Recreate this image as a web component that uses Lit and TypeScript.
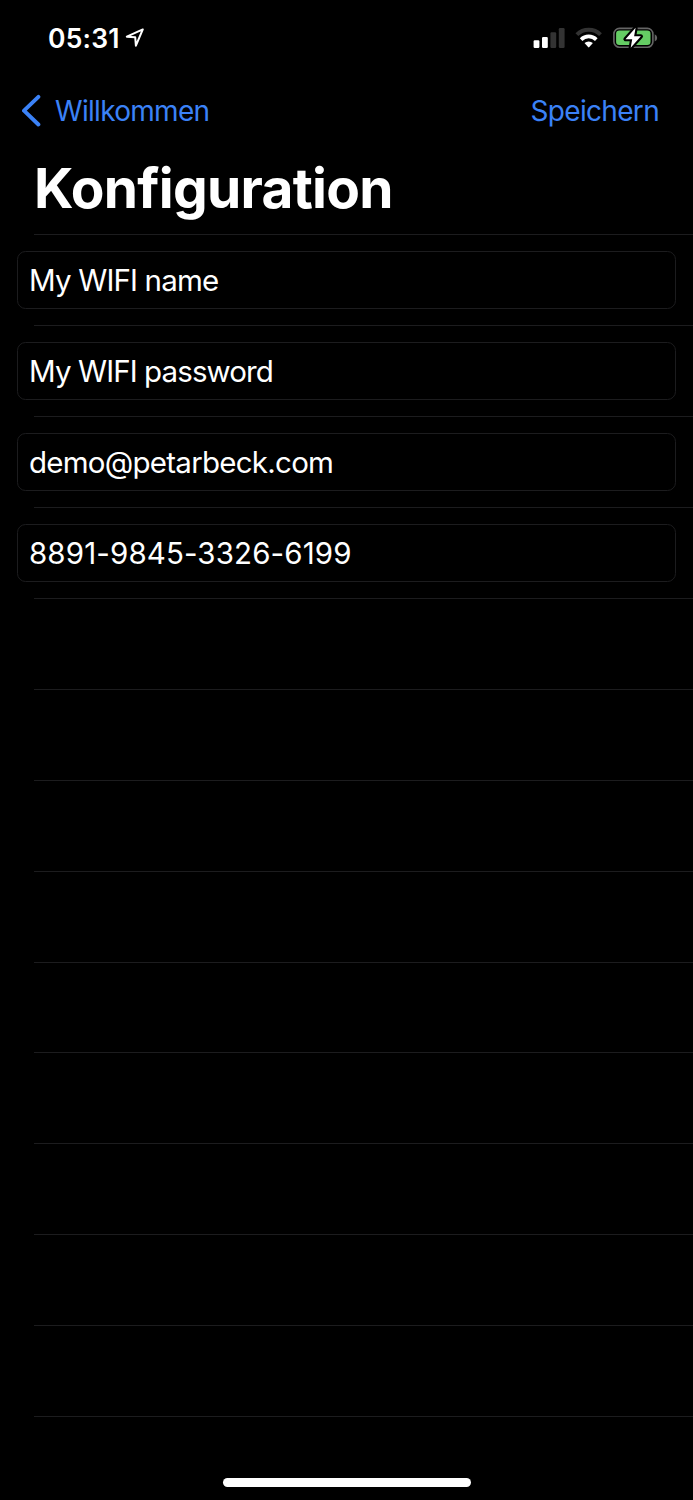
import { LitElement, html, css } from "lit";
import { customElement, state } from "lit/decorators.js";

@customElement("status-bar")
class StatusBar extends LitElement {
  static styles = css`
    :host { display: flex; justify-content: space-between; box-sizing: border-box; height: 76px; padding: 0 35px 0 48px; color: #fff; }
    .left { display: flex; }
    .time { font-size: 26.5px; line-height: 77px; font-weight: 600; letter-spacing: 0.2px; width: 76px; white-space: nowrap; }
    .arrow { margin-top: 27px; display: block; }
    .right { display: block; margin-top: 25px; }
  `;
  render() {
    return html`
      <div class="left">
        <span class="time">05:31</span>
        <svg class="arrow" width="22" height="22" viewBox="0 0 22 22" fill="none" stroke="#fff" stroke-width="2" stroke-linejoin="round">
          <path d="M18.8 2.4 L2.8 9.7 L11.2 10.2 L11.9 18.7 Z" />
        </svg>
      </div>
      <svg class="right" width="125" height="26" viewBox="0 0 125 26">
        <g fill="#fff">
          <rect x="0.6" y="15.2" width="5.8" height="7.7" rx="1.2" />
          <rect x="9" y="11.9" width="5.8" height="11" rx="1.2" />
        </g>
        <g fill="#333">
          <rect x="17.4" y="7.3" width="5.8" height="15.6" rx="1.2" />
          <rect x="25.8" y="3" width="5.8" height="19.9" rx="1.2" />
        </g>
        <g fill="none" stroke-width="4">
          <path stroke="#333" d="M43.9 9.6 A16.8 16.8 0 0 1 67.5 9.6" />
          <path stroke="#fff" stroke-width="3.7" d="M48.1 14.6 A10.8 10.8 0 0 1 63.3 14.6" />
        </g>
        <path fill="#fff" d="M51.5 18.1 A6.2 6.2 0 0 1 59.9 18.1 L56.3 22.1 Q55.7 22.7 55.1 22.1 Z" />
        <rect x="80.9" y="3.4" width="39" height="18.9" rx="5.6" fill="none" stroke="#656565" stroke-width="1.6" />
        <path fill="#656565" d="M121.7 9.2 Q124.2 10.5 124.2 12.9 Q124.2 15.3 121.7 16.6 Z" />
        <rect x="83.1" y="5.6" width="34.4" height="14.5" rx="3.3" fill="#65cd64" />
        <path d="M102.6 2.8 L92.5 14.2 H99.2 L97.7 22.8 L107.9 11.3 H101.1 Z" fill="#fff" stroke="#000" stroke-width="4.2" paint-order="stroke" stroke-linejoin="round" />
      </svg>
    `;
  }
}

@customElement("form-field")
class FormField extends LitElement {
  static properties = { value: {}, spacing: { type: Number } };
  declare value: string;
  declare spacing: number;
  static styles = css`
    :host { display: block; }
    .box { box-sizing: border-box; height: 58px; border: 1px solid #1c1c1e; border-radius: 8.5px; padding-left: 11px; font-size: 29.5px; line-height: 56px; color: #fff; white-space: nowrap; }
  `;
  render() {
    return html`<div class="box" style="letter-spacing:${this.spacing}px">${this.value}</div>`;
  }
}

@customElement("app-root")
class AppRoot extends LitElement {
  @state() fields = [
    { value: "My WIFI name", spacing: -0.84 },
    { value: "My WIFI password", spacing: -0.9 },
    { value: "demo@petarbeck.com", spacing: -0.75 },
    { value: "8891-9845-3326-6199", spacing: 0.12 },
  ];
  @state() blankRows = 10;

  static styles = css`
    :host { display: flex; flex-direction: column; height: 1500px; background: #000; color: #fff; font-family: Inter, "Liberation Sans", sans-serif; overflow: hidden; }
    status-bar, .nav, h1, .home { flex-shrink: 0; }
    .nav { display: flex; justify-content: space-between; height: 70px; padding: 0 34px 0 21px; color: #3b82f7; font-size: 28px; line-height: 70px; }
    .back { display: flex; }
    .back svg { display: block; margin: 18px 13px 0 0; }
    .back span { letter-spacing: -0.7px; }
    .save { letter-spacing: -0.68px; }
    h1 { margin: 0; height: 88.4px; padding-left: 34px; font-size: 55px; line-height: 85px; font-weight: 700; letter-spacing: -0.72px; white-space: nowrap; }
    .list { flex: 1; min-height: 0; overflow: hidden; }
    .row { height: 90.9px; box-sizing: border-box; padding: 16.7px 17px 0; background: linear-gradient(#1c1c1e, #1c1c1e) 34px 0 / 100% 1px no-repeat; }
    .home { width: 248px; height: 9px; border-radius: 5px; background: #fff; margin: 0 auto 13px; }
  `;
  render() {
    return html`
      <status-bar></status-bar>
      <div class="nav">
        <div class="back">
          <svg width="21" height="33" viewBox="0 0 21 33" fill="none" stroke="#3b82f7" stroke-width="3.9" stroke-linecap="round" stroke-linejoin="round">
            <path d="M17.4 2.8 L3 16.7 L17.4 30.5" />
          </svg>
          <span>Willkommen</span>
        </div>
        <span class="save">Speichern</span>
      </div>
      <h1>Konfiguration</h1>
      <div class="list">
        ${this.fields.map((f) => html`<div class="row"><form-field .value=${f.value} .spacing=${f.spacing}></form-field></div>`)}
        ${Array.from({ length: this.blankRows }, () => html`<div class="row"></div>`)}
      </div>
      <div class="home"></div>
    `;
  }
}
